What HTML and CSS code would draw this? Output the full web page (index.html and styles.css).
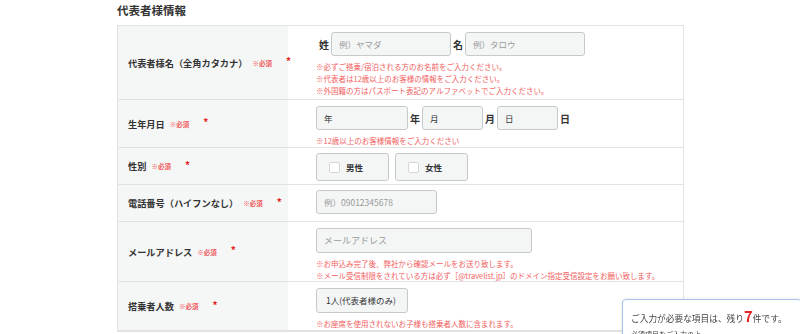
FILE: index.html
```html
<html>
<head>
	<meta charset="utf-8">
	<link rel="stylesheet" href="styles.css">
</head>
<body>
	<div class="section">
		<div class="section_title">代表者様情報</div>
		<div class="form_table">
			<div class="row row_name">
				<div class="label">代表者様名（全角カタカナ）<span class="must">※必須</span><span class="star">*</span></div>
				<div class="value">
					<div class="line">
						<span class="unit">姓</span><input class="field w120" placeholder="例）ヤマダ">
						<span class="unit">名</span><input class="field w120" placeholder="例）タロウ">
					</div>
					<div class="note">※必ずご搭乗/宿泊される方のお名前をご入力ください。<br>※代表者は12歳以上のお客様の情報をご入力ください。<br>※外国籍の方はパスポート表記のアルファベットでご入力ください。</div>
				</div>
			</div>
			<div class="row row_birth">
				<div class="label">生年月日<span class="must">※必須</span><span class="star">*</span></div>
				<div class="value">
					<div class="line">
						<input class="field w92 dark" placeholder="年"><span class="unit">年</span>
						<input class="field w61 dark" placeholder="月"><span class="unit">月</span>
						<input class="field w61 dark" placeholder="日"><span class="unit">日</span>
					</div>
					<div class="note">※12歳以上のお客様情報をご入力ください</div>
				</div>
			</div>
			<div class="row row_sex">
				<div class="label">性別<span class="must">※必須</span><span class="star">*</span></div>
				<div class="value">
					<div class="line">
						<label class="choice"><span class="box"></span>男性</label>
						<label class="choice"><span class="box"></span>女性</label>
					</div>
				</div>
			</div>
			<div class="row row_tel">
				<div class="label">電話番号（ハイフンなし）<span class="must">※必須</span><span class="star">*</span></div>
				<div class="value">
					<div class="line">
						<input class="field w121" placeholder="例）09012345678">
					</div>
				</div>
			</div>
			<div class="row row_mail">
				<div class="label">メールアドレス<span class="must">※必須</span><span class="star">*</span></div>
				<div class="value">
					<div class="line">
						<input class="field w216 big" placeholder="メールアドレス">
					</div>
					<div class="note">※お申込み完了後、弊社から確認メールをお送り致します。<br>※メール受信制限をされている方は必ず［@travelist.jp］のドメイン指定受信設定をお願い致します。</div>
				</div>
			</div>
			<div class="row row_count">
				<div class="label">搭乗者人数<span class="must">※必須</span><span class="star">*</span></div>
				<div class="value">
					<div class="line">
						<div class="select">1人(代表者様のみ)</div>
					</div>
					<div class="note">※お座席を使用されないお子様も搭乗者人数に含まれます。</div>
				</div>
			</div>
		</div>
	</div>
	<div class="remain">
		<div class="remain_text">ご入力が必要な項目は、残り<span class="remain_num">7</span>件です。</div>
		<div class="remain_sub">必須項目をご入力の上、</div>
	</div>
</body>
</html>
```

FILE: styles.css
```css
body
{
	margin: 0;
	background-color: white;
	font-family: "Noto Sans CJK JP", "Noto Sans", sans-serif;
	color: #333;
}
.section
{
	margin-left: 117px;
	width: 567px;
}
.section_title
{
	font-size: 11.5px;
	font-weight: bold;
	line-height: 14px;
	padding-top: 3px;
	height: 22px;
}
.form_table
{
	border: 1px solid #e2e2e2;
	border-bottom: 2px solid #e2e2e2;
}
.row
{
	display: flex;
	border-top: 1px solid #e2e2e2;
}
.row:first-child
{
	border-top: none;
}
.label
{
	width: 160px;
	flex: none;
	background-color: #f5f6f6;
	display: flex;
	align-items: center;
	padding-left: 10px;
	font-size: 9.2px;
	font-weight: bold;
	white-space: nowrap;
}
.must
{
	color: #f05a5a;
	font-size: 6.5px;
	margin-left: 5px;
}
.star
{
	color: #e82020;
	font-size: 10px;
	margin-left: 14px;
	margin-top: -4px;
}
.value
{
	flex: 1;
	padding: 6px 0 0 28px;
}
.row_name { height: 73px; }
.row_birth { height: 47px; }
.row_sex { height: 36px; }
.row_tel { height: 36px; }
.row_mail { height: 59px; }
.row_count { height: 48px; }
.line
{
	display: flex;
	align-items: center;
}
.unit
{
	font-size: 10px;
	font-weight: bold;
	margin: 0 2px;
}
.line .unit:first-child
{
	margin-left: 3px;
}
.field
{
	box-sizing: border-box;
	height: 24px;
	border: 1px solid #c6caca;
	border-radius: 3px;
	background-color: #f4f6f6;
	font-family: "Noto Sans CJK JP", sans-serif;
	font-size: 8.5px;
	padding: 0 7px;
	outline: none;
}
.field::placeholder
{
	color: #9a9a9a;
}
.field.dark::placeholder
{
	color: #333;
}
.field.big
{
	height: 25px;
	font-size: 9px;
}
.w120 { width: 120px; }
.w92 { width: 92px; }
.w61 { width: 61px; }
.w121 { width: 121px; }
.w216 { width: 216px; }
.note
{
	margin-top: 5px;
	color: #f26060;
	font-size: 7.5px;
	line-height: 12px;
}
.row_sex .value,
.row_tel .value
{
	padding-top: 5px;
}
.choice
{
	box-sizing: border-box;
	display: flex;
	align-items: center;
	width: 73px;
	height: 28px;
	margin-right: 6px;
	border: 1px solid #c6caca;
	border-radius: 3px;
	background-color: #f4f6f6;
	font-size: 8.5px;
	font-weight: bold;
	padding-left: 12px;
}
.box
{
	width: 9px;
	height: 9px;
	border: 1px solid #d6d6d6;
	border-radius: 2px;
	background-color: white;
	margin-right: 6px;
}
.select
{
	box-sizing: border-box;
	width: 92px;
	height: 25px;
	border: 1px solid #c6caca;
	border-radius: 3px;
	background-color: #f4f6f6;
	font-size: 8.5px;
	line-height: 23px;
	padding-left: 9px;
}
.remain
{
	position: fixed;
	left: 622px;
	top: 299px;
	width: 170px;
	height: 60px;
	background-color: white;
	border: 1px solid #a9c4ea;
	border-radius: 4px;
	box-shadow: 0 0 3px rgba(0, 0, 0, 0.12);
	padding: 8px 0 0 8px;
}
.remain_text
{
	font-size: 8.7px;
	color: #444;
	line-height: 16px;
}
.remain_num
{
	color: #e82828;
	font-weight: bold;
	font-size: 15px;
}
.remain_sub
{
	font-size: 7px;
	color: #444;
	margin-top: 2px;
}
```
